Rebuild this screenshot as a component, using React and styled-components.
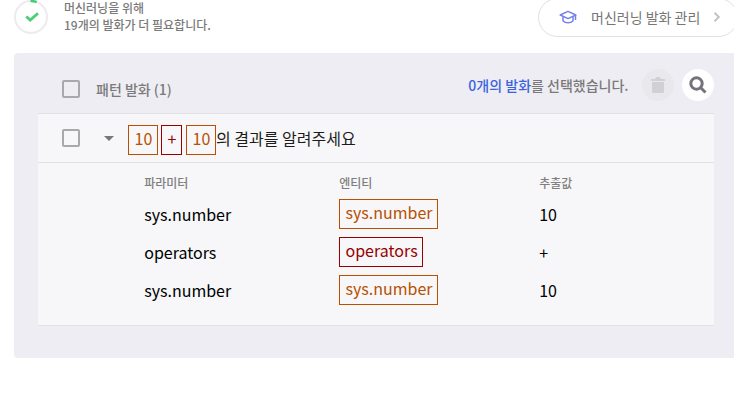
import React from "react";
import styled, { createGlobalStyle } from "styled-components";

const GlobalStyle = createGlobalStyle`
  *, *::before, *::after { box-sizing: border-box; }
  html, body { margin: 0; padding: 0; background: #fff; overflow: hidden; }
  body { font-family: "Noto Sans CJK KR", sans-serif; color: #000; }
`;

const Page = styled.main`
  width: 734px;
  height: 406px;
  overflow: hidden;
  background: #fff;
`;

const Header = styled.header`
  display: flex;
  align-items: flex-start;
  height: 53px;
  padding-left: 14px;
`;

const Ring = styled.svg`
  flex: none;
  display: block;
  width: 34px;
  height: 34px;
`;

const Status = styled.p`
  flex: 1;
  margin: -1px 0 0 16px;
  font-size: 12px;
  font-weight: 500;
  line-height: 17px;
  color: #7a7a7a;
  white-space: nowrap;
`;

const ManageButton = styled.button`
  flex: none;
  display: flex;
  align-items: center;
  width: 200px;
  height: 39px;
  margin: -2px -4px 0 0;
  padding: 0 0 2px 20px;
  border: 1px solid #e1e1e5;
  border-radius: 20px;
  background: #fff;
  color: #767676;
  font-family: inherit;
  font-size: 14px;
  line-height: 20px;
  text-align: left;
  white-space: nowrap;
  svg { display: block; flex: none; }
  span { width: 122px; margin-left: 14px; }
`;

const Panel = styled.section`
  width: 740px;
  height: 305px;
  margin-left: 14px;
  padding: 0 24px;
  border-radius: 4px;
  background: #eeedf3;
`;

const Toolbar = styled.div`
  display: flex;
  align-items: center;
  width: 676px;
  height: 60px;
  padding: 12px 0 0 24px;
`;

const Checkbox = styled.span`
  flex: none;
  width: 18px;
  height: 18px;
  border: 2px solid #a9a9ab;
  border-radius: 2px;
`;

const Title = styled.h2`
  flex: 1;
  margin: 0 0 0 16px;
  font-size: 14px;
  font-weight: 500;
  line-height: 20px;
  color: #7a7a7a;
`;

const Selected = styled.p`
  margin: -8px 13.5px 0 0;
  font-size: 14px;
  font-weight: 500;
  line-height: 20px;
  color: #7a7a7a;
  white-space: nowrap;
  strong { font-weight: 500; color: #3a62e0; }
`;

const RoundButton = styled.button`
  flex: none;
  display: flex;
  align-items: center;
  justify-content: center;
  width: 32px;
  height: 32px;
  margin: -8px 0 0 ${(p) => p.$gap || 0}px;
  padding: 0;
  border: 0;
  border-radius: 50%;
  background: ${(p) => p.$bg};
`;

const Card = styled.div`
  width: 676px;
  height: 213px;
  border-top: 1px solid #e2e2e6;
  border-bottom: 1px solid #e2e2e4;
  background: #f7f7f9;
`;

const Utterance = styled.div`
  display: flex;
  align-items: center;
  height: 49px;
  padding-left: 24px;
  border-bottom: 1px solid #e2e2e6;
  font-size: 16px;
  line-height: 26px;
  white-space: nowrap;
`;

const Caret = styled.svg`
  flex: none;
  display: block;
  width: 10px;
  height: 5px;
  margin: 0 14px 0 24px;
`;

const Tag = styled.span`
  display: inline-block;
  height: 30px;
  padding: 0 4.7px 0 5.5px;
  border: 1px solid ${(p) => p.$color};
  color: ${(p) => p.$color};
  font-size: 16px;
  line-height: 25px;
`;

const Sentence = styled.div`
  display: flex;
  margin-top: 3px;
  color: #1c1c1c;
  ${Tag} { width: 30px; }
  ${Tag}:nth-child(2) { width: 21px; margin: 0 4px 0 3px; }
`;

const Table = styled.div`
  display: grid;
  grid-template-columns: 195px 200px 1fr;
  grid-template-rows: 36px repeat(3, 38px);
  padding-left: 106px;
`;

const Head = styled.span`
  padding: 11px 0 0 0.2px;
  font-size: 12px;
  font-weight: 500;
  line-height: 18px;
  color: #7f7f7f;
`;

const Cell = styled.span`
  padding-left: 0.2px;
  font-size: 16px;
  line-height: 31px;
`;

const ORANGE = "#b85000";
const RED = "#980000";

const PARAMETERS = [
  { name: "sys.number", color: ORANGE, value: "10" },
  { name: "operators", color: RED, value: "+" },
  { name: "sys.number", color: ORANGE, value: "10" },
];

export default function App() {
  return (
    <Page>
      <GlobalStyle />
      <Header>
        <Ring viewBox="0 0 34 34" fill="none">
          <circle cx="17" cy="17" r="16" stroke="#ececf0" strokeWidth="2" />
          <path d="M16.5 1a16 16 0 0 1 6.2 1.1" stroke="#43cb70" strokeWidth="2.5" />
          <path d="m12.3 16.5 3.9 3.6 7.8-6.8" stroke="#4ccd78" strokeWidth="2.8" />
        </Ring>
        <Status>
          머신러닝을 위해
          <br />
          19개의 발화가 더 필요합니다.
        </Status>
        <ManageButton>
          <svg width="18" height="14" viewBox="0 0 18 14" fill="none" stroke="#7482e5" strokeWidth="1.5">
            <path d="M1.2 5 9 1.4 16.8 5 9 8.6Z" strokeLinejoin="round" />
            <path d="M4 6.5v4.2c2.5 2.8 7.5 2.8 10 0V6.5M16.5 5v5" />
          </svg>
          <span>머신러닝 발화 관리</span>
          <svg width="8" height="10" viewBox="0 0 8 10" fill="none" stroke="#c3c3cb" strokeWidth="2">
            <path d="m1.5 .7 4.3 4.3-4.3 4.3" />
          </svg>
        </ManageButton>
      </Header>
      <Panel>
        <Toolbar>
          <Checkbox />
          <Title>패턴 발화 (1)</Title>
          <Selected>
            <strong>0개의 발화</strong>를 선택했습니다.
          </Selected>
          <RoundButton $bg="#e8e8ed" aria-label="삭제">
            <svg width="14" height="16" viewBox="0 0 14 16" fill="#d0d0d6">
              <path d="M0 2h4l1.2-2h3.6L10 2h4v2H0ZM1 5h12v9.5a1.5 1.5 0 0 1-1.5 1.5h-9A1.5 1.5 0 0 1 1 14.5Z" />
            </svg>
          </RoundButton>
          <RoundButton $bg="#fff" $gap={8} aria-label="검색">
            <svg width="18" height="18" viewBox="0 0 18 18" fill="none" stroke="#73737d">
              <circle cx="7.5" cy="7.5" r="5.7" strokeWidth="3" />
              <path d="m11.5 11.5 5 5" strokeWidth="3" />
            </svg>
          </RoundButton>
        </Toolbar>
        <Card>
          <Utterance>
            <Checkbox />
            <Caret viewBox="0 0 10 5"><path d="M0 0h10L5 5Z" fill="#77777b" /></Caret>
            <Sentence>
              <Tag $color={ORANGE}>10</Tag>
              <Tag $color={RED}>+</Tag>
              <Tag $color={ORANGE}>10</Tag>
              의 결과를 알려주세요
            </Sentence>
          </Utterance>
          <Table>
            <Head>파라미터</Head>
            <Head>엔티티</Head>
            <Head>추출값</Head>
            {PARAMETERS.map((p, i) => (
              <React.Fragment key={i}>
                <Cell>{p.name}</Cell>
                <div><Tag $color={p.color}>{p.name}</Tag></div>
                <Cell>{p.value}</Cell>
              </React.Fragment>
            ))}
          </Table>
        </Card>
      </Panel>
    </Page>
  );
}
